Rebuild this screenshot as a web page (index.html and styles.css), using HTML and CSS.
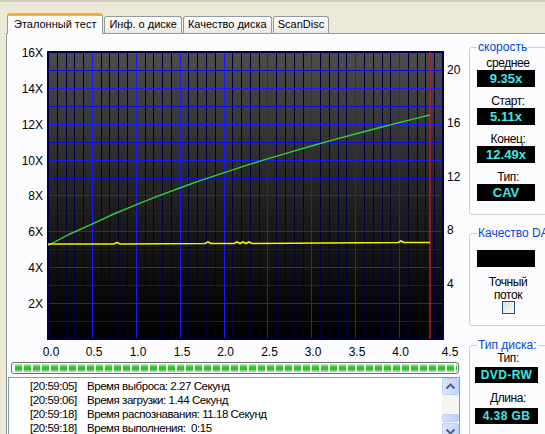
FILE: index.html
```html
<!DOCTYPE html>
<html lang="ru">
<head>
  <meta charset="UTF-8">
  <title>Эталонный тест</title>
  <link rel="stylesheet" href="styles.css">
</head>
<body>
  <div class="edge"></div>

  <div class="tabs">
    <div class="tab active">Эталонный тест</div>
    <div class="tab">Инф. о диске</div>
    <div class="tab">Качество диска</div>
    <div class="tab">ScanDisc</div>
  </div>

  <div class="page">
    <div class="main">
      <!-- speed graph, drawn in window coordinates -->
      <svg class="chart" width="458" height="326" viewBox="7 34 458 326">
        <defs>
          <linearGradient id="plot-bg" x1="0" y1="0" x2="0" y2="1">
            <stop offset="0" stop-color="#4c4c4c"/>
            <stop offset="0.6" stop-color="#1a1a1a"/>
            <stop offset="1" stop-color="#000"/>
          </linearGradient>
        </defs>

        <rect x="48" y="52" width="395" height="287" fill="url(#plot-bg)"/>

        <!-- minor verticals (0.1) -->
        <path class="grid-minor" d="M57.5 52V339M66.5 52V339M74.5 52V339M83.5 52V339
          M101.5 52V339M109.5 52V339M118.5 52V339M127.5 52V339
          M145.5 52V339M153.5 52V339M162.5 52V339M171.5 52V339
          M188.5 52V339M197.5 52V339M206.5 52V339M215.5 52V339
          M232.5 52V339M241.5 52V339M250.5 52V339M259.5 52V339
          M276.5 52V339M285.5 52V339M294.5 52V339M303.5 52V339
          M320.5 52V339M329.5 52V339M338.5 52V339M346.5 52V339
          M364.5 52V339M373.5 52V339M382.5 52V339M390.5 52V339
          M408.5 52V339M417.5 52V339M425.5 52V339M434.5 52V339"/>
        <!-- horizontals (1X) -->
        <path class="grid-h" d="M48 321.5H443M48 285.5H443M48 249.5H443M48 213.5H443
          M48 178.5H443M48 142.5H443M48 106.5H443M48 70.5H443"/>
        <path class="grid-major" d="M48 303.5H443M48 267.5H443M48 231.5H443M48 195.5H443
          M48 160.5H443M48 124.5H443M48 88.5H443
          M92.5 52V339M136.5 52V339M180.5 52V339M224.5 52V339
          M267.5 52V339M311.5 52V339M355.5 52V339M399.5 52V339"/>

        <rect x="48" y="52" width="395" height="287" fill="none" stroke="#000048" stroke-width="2"/>

        <line x1="430" y1="52" x2="430" y2="339" stroke="#b81c1c" stroke-width="1.5"/>

        <polyline class="read-speed" points="48,245.5 69.9,234 91.9,224.1 113.8,214 135.8,204.8 157.7,196.1
          179.7,188 201.6,180.2 223.6,172.8 245.5,165.7 267.4,158.9 289.4,152.4 311.3,146
          333.3,139.9 355.2,134 377.2,128.2 399.1,122.6 421.1,117.1 430,115"/>
        <polyline class="cpu-load" points="48,244 114,244 117,242.5 120,244 205,243.5 208,242 211,243.5
          234,243.5 237,242 240,243.5 243,242 246,243.5 249,242 252,243.5 398,242.5 401,241
          404,242.5 430,242.5"/>

        <g class="axis-left">
          <text x="43" y="56.5">16X</text>
          <text x="43" y="92.5">14X</text>
          <text x="43" y="128.5">12X</text>
          <text x="43" y="164.5">10X</text>
          <text x="43" y="199.5">8X</text>
          <text x="43" y="235.5">6X</text>
          <text x="43" y="271.5">4X</text>
          <text x="43" y="307.5">2X</text>
        </g>

        <g class="axis-right">
          <text x="447" y="73.5">20</text>
          <text x="447" y="127">16</text>
          <text x="447" y="180.5">12</text>
          <text x="447" y="234">8</text>
          <text x="447" y="287.5">4</text>
        </g>

        <g class="axis-bottom">
          <text x="51" y="356">0.0</text>
          <text x="94" y="356">0.5</text>
          <text x="138" y="356">1.0</text>
          <text x="182" y="356">1.5</text>
          <text x="225.5" y="356">2.0</text>
          <text x="269.5" y="356">2.5</text>
          <text x="313" y="356">3.0</text>
          <text x="357" y="356">3.5</text>
          <text x="400.5" y="356">4.0</text>
          <text x="450" y="356">4.5</text>
        </g>
      </svg>

      <div class="progress"><div class="progress-fill"></div></div>

      <div class="log">
        <div class="log-lines">
          <div class="log-row"><span class="time">[20:59:05]</span>Время выброса: 2.27 Секунд</div>
          <div class="log-row"><span class="time">[20:59:06]</span>Время загрузки: 1.44 Секунд</div>
          <div class="log-row"><span class="time">[20:59:18]</span>Время распознавания: 11.18 Секунд</div>
          <div class="log-row"><span class="time">[20:59:18]</span>Время выполнения:&nbsp; 0:15</div>
        </div>
        <div class="scrollbar">
          <div class="sb-btn">
            <svg width="15" height="15" viewBox="0 0 15 15"><path d="M3.5 9.5L7.5 5.5L11.5 9.5" fill="none" stroke="#4d6185" stroke-width="2"/></svg>
          </div>
          <div class="sb-track"><div class="sb-thumb"></div></div>
          <div class="sb-btn">
            <svg width="15" height="15" viewBox="0 0 15 15"><path d="M3.5 5.5L7.5 9.5L11.5 5.5" fill="none" stroke="#4d6185" stroke-width="2"/></svg>
          </div>
        </div>
      </div>
    </div>

    <div class="side">
      <fieldset class="group speed">
        <legend>скорость</legend>
        <div class="lbl first">среднее</div>
        <div class="val">9.35x</div>
        <div class="lbl">Старт:</div>
        <div class="val">5.11x</div>
        <div class="lbl">Конец:</div>
        <div class="val">12.49x</div>
        <div class="lbl">Тип:</div>
        <div class="val">CAV</div>
      </fieldset>

      <fieldset class="group dae">
        <legend>Качество DAE</legend>
        <div class="val"></div>
        <div class="note">Точный<br>поток</div>
        <div class="check"></div>
      </fieldset>

      <fieldset class="group disc">
        <legend>Тип диска:</legend>
        <div class="lbl first">Тип:</div>
        <div class="val wide">DVD-RW</div>
        <div class="lbl">Длина:</div>
        <div class="val wide">4.38 GB</div>
      </fieldset>
    </div>
  </div>
</body>
</html>
```

FILE: styles.css
```css
html, body {
  margin: 0;
  overflow: hidden;
}
body {
  width: 545px;
  height: 434px;
  background: #ece9d8;
  font-family: "Liberation Sans", Arial, sans-serif;
  font-size: 11px;
  color: #000;
}
.edge {
  height: 2px;
  background: #d2cebe;
}

/* tabs */
.tabs {
  display: flex;
  align-items: flex-end;
  height: 20px;
  padding: 11px 0 0 7px;
  position: relative;
  z-index: 1;
}
.tab {
  height: 16px;
  line-height: 15px;
  padding: 0 4px;
  margin-left: 1px;
  border: 1px solid #919b9c;
  border-bottom: none;
  border-radius: 3px 3px 0 0;
  background: linear-gradient(#ffffff, #f3f3ef 60%, #e8e7e1);
  white-space: nowrap;
}
.tab.active {
  height: 18px;
  line-height: 17px;
  margin-left: 0;
  margin-bottom: -1px;
  padding: 0 6px;
  border-top: 3px solid #f6ad30;
  background: #fcfcfe;
}

/* tab page */
.page {
  display: flex;
  width: 560px;
  height: 420px;
  margin-left: 6px;
  border: 1px solid #919b9c;
  background: #fcfcfe;
}
.main {
  width: 458px;
  flex-shrink: 0;
}
.chart {
  display: block;
}
.grid-minor {
  stroke: #00003c;
  stroke-width: 1;
}
.grid-h {
  stroke: #0a0ad2;
  stroke-width: 1;
}
.grid-major {
  stroke: #1818ff;
  stroke-width: 1;
}
.read-speed {
  fill: none;
  stroke: #33d033;
  stroke-width: 1.4;
}
.cpu-load {
  fill: none;
  stroke: #f4f400;
  stroke-width: 1.6;
}
.axis-left text {
  font-size: 12px;
  text-anchor: end;
}
.axis-right text,
.axis-bottom text {
  font-size: 12px;
}
.axis-bottom text {
  text-anchor: middle;
}

/* progress */
.progress {
  width: 444px;
  height: 8px;
  margin: 2px 0 0 4px;
  padding: 1px;
  border: 1px solid #6e6e6e;
  border-radius: 3px;
  background: #fff;
}
.progress-fill {
  height: 100%;
  background:
    repeating-linear-gradient(to right, #f2fbf1 0 2px, transparent 2px 9px),
    linear-gradient(#c9efc6, #3cc43c 35%, #2fb92f 65%, #b5e9b1);
}

/* log */
.log {
  display: flex;
  width: 450px;
  height: 62px;
  margin: 3px 0 0 1px;
  border: 1px solid #7f9db9;
  background: #fff;
}
.log-lines {
  flex: 1;
  padding: 1px 0 0 21px;
}
.log-row {
  line-height: 14px;
  font-size: 11.5px;
  letter-spacing: -0.45px;
  white-space: nowrap;
}
.time {
  display: inline-block;
  width: 57px;
}
.scrollbar {
  display: flex;
  flex-direction: column;
  width: 17px;
  background: #f5f5f1;
}
.sb-btn {
  height: 15px;
  border: 1px solid #bccffa;
  border-radius: 2px;
  background: linear-gradient(to right, #dde8fe, #c3d4fc);
}
.sb-btn svg {
  display: block;
}
.sb-track {
  flex: 1;
  display: flex;
  flex-direction: column;
  justify-content: flex-end;
  padding-bottom: 1px;
}
.sb-thumb {
  height: 6px;
  border: 1px solid #bccffa;
  border-radius: 2px;
  background: linear-gradient(to right, #d4e1fd, #bccefb);
}

/* right panel */
.side {
  width: 80px;
  flex-shrink: 0;
  padding: 6px 0 0 4px;
}
.group {
  width: 76px;
  min-width: 0;
  margin: 0;
  padding: 0 0 13px;
  border: 1px solid #d0d0bf;
  border-radius: 3px;
}
.group legend {
  margin-left: 7px;
  padding: 0 1px;
  line-height: 14px;
  font-size: 12px;
  color: #0046d5;
  white-space: nowrap;
}
.lbl {
  margin-top: 7px;
  line-height: 14px;
  font-size: 12px;
  text-align: center;
  letter-spacing: -0.4px;
}
.lbl.first {
  margin-top: 2px;
}
.val {
  width: 58px;
  height: 17px;
  margin-left: 7px;
  line-height: 17px;
  background: #000;
  color: #3ee8e8;
  font-size: 13px;
  font-weight: bold;
  text-align: center;
}
.dae {
  margin-top: 11px;
  padding-bottom: 11px;
}
.dae .val {
  margin-top: 10px;
}
.note {
  margin-top: 9px;
  line-height: 13px;
  font-size: 12px;
  letter-spacing: -0.4px;
  text-align: center;
}
.check {
  width: 11px;
  height: 11px;
  margin: -1px auto 0;
  border: 1px solid #1c5180;
  background: linear-gradient(135deg, #dcdcd7, #fbfbfa);
}
.disc {
  margin-top: 12px;
}
.disc .lbl.first {
  margin-top: -1px;
}
.disc .lbl {
  margin-top: 8px;
}
.val.wide {
  width: 63px;
  height: 16px;
  margin: 2px 0 0 5px;
  line-height: 16px;
  font-size: 12px;
  letter-spacing: 0.4px;
}
.disc .lbl + .val.wide + .lbl + .val.wide {
  margin-top: 3px;
}
```
